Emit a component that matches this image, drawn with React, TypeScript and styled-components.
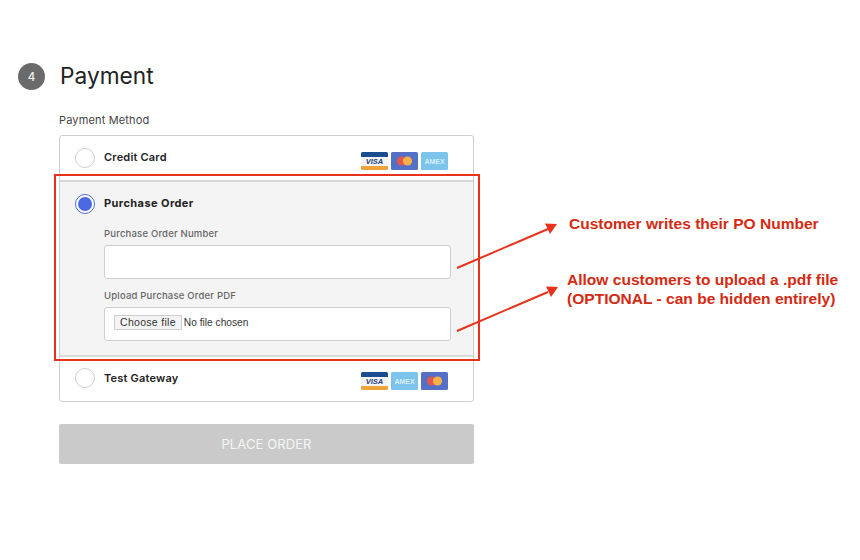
import React from "react";
import styled, { createGlobalStyle } from "styled-components";

const Global = createGlobalStyle`
  html, body { margin: 0; padding: 0; background: #fff; }
  body { font-family: Inter, "Noto Sans", sans-serif; width: 860px; height: 560px; overflow: hidden; }
`;

const Page = styled.div`
  position: relative;
  width: 860px;
  height: 560px;
  box-sizing: border-box;
  padding: 63px 0 0 18px;
`;

const Header = styled.div`
  display: flex;
  align-items: center;
  gap: 15px;
  height: 27px;
`;

const StepBadge = styled.div`
  width: 27px;
  height: 27px;
  border-radius: 50%;
  background: #6a6a6a;
  color: #f2f2f2;
  display: flex;
  align-items: center;
  justify-content: center;
  font-size: 11.5px;
  font-weight: 500;
`;

const Title = styled.h1`
  margin: -2px 0 0;
  font-size: 22.7px;
  font-weight: 400;
  color: #222;
`;

const Column = styled.div`
  margin: 22px 0 0 41px;
  width: 415px;
`;

const SectionLabel = styled.div`
  font-size: 11px;
  line-height: 16px;
  color: #444;
  letter-spacing: 0.15px;
  margin-bottom: 7px;
`;

const MethodList = styled.div`
  border: 1px solid #cfcfcf;
  border-radius: 3px;
  background: #fff;
  height: 267px;
  box-sizing: border-box;
  display: flex;
  flex-direction: column;
`;

const MethodRow = styled.div`
  height: 44px;
  flex: none;
  box-sizing: border-box;
  padding: 0 25px 2px 15px;
  display: flex;
  align-items: center;
`;

const Radio = styled.div<{ $checked?: boolean; $nudge?: number }>`
  width: 20px;
  height: 20px;
  box-sizing: border-box;
  border-radius: 50%;
  flex: none;
  margin-top: ${(p) => p.$nudge ?? 0}px;
  background: #fff;
  border: 1px solid ${(p) => (p.$checked ? "#4a69e2" : "#cfcfcf")};
  display: flex;
  align-items: center;
  justify-content: center;
  &::after {
    content: "";
    display: ${(p) => (p.$checked ? "block" : "none")};
    width: 14px;
    height: 14px;
    border-radius: 50%;
    background: #4a69e2;
  }
`;

const MethodName = styled.div<{ $strong?: boolean }>`
  margin-left: 9px;
  margin-top: ${(p) => (p.$strong ? "-2px" : "0")};
  flex: 1;
  font-size: 11px;
  font-weight: ${(p) => (p.$strong ? 700 : 600)};
  letter-spacing: ${(p) => (p.$strong ? "0.42px" : "0.2px")};
  color: #222;
`;

const Cards = styled.div<{ $drop: number }>`
  display: flex;
  gap: 3px;
  margin-top: ${(p) => p.$drop}px;
`;

const ExpandedPanel = styled.div`
  flex: 1;
  background: #f4f4f4;
  border-top: 2px solid #d6d6d6;
  border-bottom: 2px solid #dcdcdc;
  box-sizing: border-box;
  padding: 0 22px 0 15px;
`;

const PanelHead = styled.div`
  display: flex;
  align-items: center;
  height: 45px;
  box-sizing: border-box;
  padding-bottom: 1px;
`;

const FieldBody = styled.div`
  margin: 0 0 0 29px;
`;

const FieldLabel = styled.div`
  font-size: 9.5px;
  line-height: 14px;
  font-weight: 500;
  color: #666;
  letter-spacing: 0.2px;
  margin-bottom: 4px;
`;

const TextField = styled.div`
  height: 34px;
  box-sizing: border-box;
  background: #fff;
  border: 1px solid #cfcfcf;
  border-radius: 3px;
  margin-bottom: 10px;
  display: flex;
  align-items: center;
  padding: 0 0 3px 9px;
`;

const ChooseButton = styled.span`
  font-family: "Liberation Sans", Arial, sans-serif;
  font-size: 10.5px;
  letter-spacing: 0.3px;
  line-height: 13px;
  color: #333;
  background: #f4f4f4;
  border: 1px solid #cdcdcd;
  padding: 0 5px;
  height: 13px;
  display: inline-block;
`;

const NoFile = styled.span`
  font-family: "Liberation Sans", Arial, sans-serif;
  font-size: 10.2px;
  color: #333;
  margin-left: 2px;
`;

const PlaceOrder = styled.button`
  display: block;
  width: 100%;
  height: 40px;
  margin-top: 22px;
  border: none;
  border-radius: 2px;
  background: #cacaca;
  color: #f6f6f6;
  font-family: Inter, sans-serif;
  font-size: 13px;
  letter-spacing: 0.1px;
`;

const Highlight = styled.div`
  position: absolute;
  left: 54px;
  top: 174px;
  width: 426px;
  height: 187px;
  box-sizing: border-box;
  border: 2px solid #e8321c;
  pointer-events: none;
`;

const Arrows = styled.svg`
  position: absolute;
  left: 0;
  top: 0;
  pointer-events: none;
`;

const Note = styled.div<{ $left: number; $top: number }>`
  position: absolute;
  left: ${(p) => p.$left}px;
  top: ${(p) => p.$top}px;
  font-family: "Liberation Sans", Arial, sans-serif;
  font-weight: 700;
  font-size: 15.55px;
  line-height: 19px;
  color: #d42a12;
  white-space: nowrap;
`;

const Visa = () => (
  <svg width="27" height="18" viewBox="0 0 27 18">
    <rect width="27" height="18" rx="1.5" fill="#f4f4f4" />
    <path d="M0 5V1.5A1.5 1.5 0 0 1 1.5 0h24A1.5 1.5 0 0 1 27 1.5V5z" fill="#1c4c90" />
    <path d="M0 14v2.5A1.5 1.5 0 0 0 1.5 18h24a1.5 1.5 0 0 0 1.5-1.5V14z" fill="#eea43a" />
    <text x="13.5" y="12.4" textAnchor="middle" fontFamily="Liberation Sans" fontStyle="italic" fontWeight="700" fontSize="7.5" fill="#26407f">VISA</text>
  </svg>
);

const Master = () => (
  <svg width="27" height="18" viewBox="0 0 27 18">
    <rect width="27" height="18" rx="1.5" fill="#5470c6" />
    <circle cx="10.5" cy="9" r="4.6" fill="#e2584f" />
    <circle cx="16.5" cy="9" r="4.6" fill="#f5b04a" />
  </svg>
);

const Amex = () => (
  <svg width="27" height="18" viewBox="0 0 27 18">
    <rect width="27" height="18" rx="1.5" fill="#7cc4ec" />
    <text x="13.5" y="11.6" textAnchor="middle" fontFamily="Liberation Sans" fontWeight="700" fontSize="7" fill="#d8eefa">AMEX</text>
  </svg>
);

export default function App() {
  return (
    <Page>
      <Global />
      <Header>
        <StepBadge>4</StepBadge>
        <Title>Payment</Title>
      </Header>
      <Column>
        <SectionLabel>Payment Method</SectionLabel>
        <MethodList>
          <MethodRow>
            <Radio $nudge={2} />
            <MethodName>Credit Card</MethodName>
            <Cards $drop={8}>
              <Visa />
              <Master />
              <Amex />
            </Cards>
          </MethodRow>
          <ExpandedPanel>
            <PanelHead>
              <Radio $checked />
              <MethodName $strong>Purchase Order</MethodName>
            </PanelHead>
            <FieldBody>
              <FieldLabel>Purchase Order Number</FieldLabel>
              <TextField />
              <FieldLabel>Upload Purchase Order PDF</FieldLabel>
              <TextField>
                <ChooseButton>Choose file</ChooseButton>
                <NoFile>No file chosen</NoFile>
              </TextField>
            </FieldBody>
          </ExpandedPanel>
          <MethodRow>
            <Radio />
            <MethodName>Test Gateway</MethodName>
            <Cards $drop={6}>
              <Visa />
              <Amex />
              <Master />
            </Cards>
          </MethodRow>
        </MethodList>
        <PlaceOrder>PLACE ORDER</PlaceOrder>
      </Column>
      <Highlight />
      <Arrows width="860" height="560" viewBox="0 0 860 560">
        <line x1="457" y1="268" x2="548" y2="229" stroke="#e8321c" strokeWidth="2" />
        <polygon points="557,224 545,223.5 550,234" fill="#e8321c" />
        <line x1="457" y1="331" x2="548" y2="292" stroke="#e8321c" strokeWidth="2" />
        <polygon points="558,287 546,286.5 551,297" fill="#e8321c" />
      </Arrows>
      <Note $left={569} $top={214}>Customer writes their PO Number</Note>
      <Note $left={567} $top={270}>
        Allow customers to upload a .pdf file
        <br />
        (OPTIONAL - can be hidden entirely)
      </Note>
    </Page>
  );
}
